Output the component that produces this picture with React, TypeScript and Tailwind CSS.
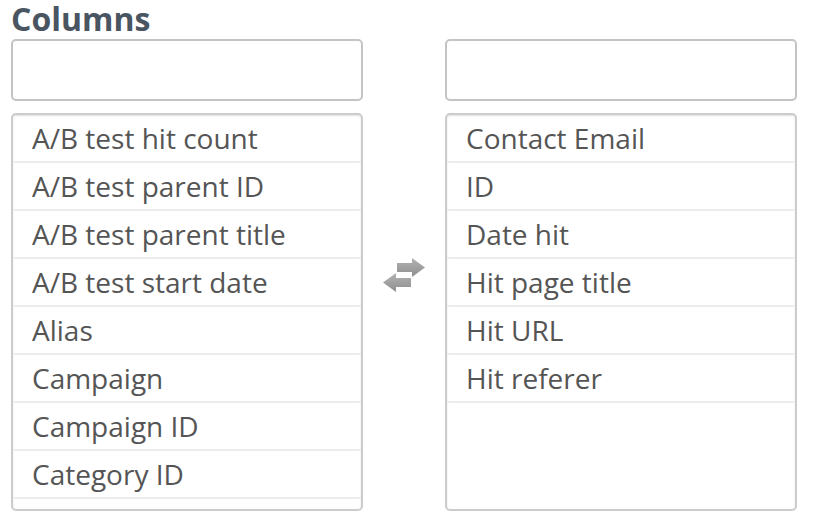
import React from "react";

const left = [
  "A/B test hit count",
  "A/B test parent ID",
  "A/B test parent title",
  "A/B test start date",
  "Alias",
  "Campaign",
  "Campaign ID",
  "Category ID",
];
const right = ["Contact Email", "ID", "Date hit", "Hit page title", "Hit URL", "Hit referer"];

function List({ items }: { items: string[] }) {
  return (
    <div className="h-[398px] w-[352px] overflow-hidden rounded-[5px] border-2 border-[#cccccc] bg-white shadow-[inset_0_1px_2px_rgba(0,0,0,0.12)]">
      {items.map((t) => (
        <div
          key={t}
          className="flex h-[48px] items-center border-b-2 border-[#ececec] pl-[19px] text-[28px] text-[#555555]"
        >
          {t}
        </div>
      ))}
    </div>
  );
}

export default function App() {
  return (
    <div
      className="h-[524px] w-[818px] bg-white pl-[11px]"
      style={{ fontFamily: '"Open Sans", "Liberation Sans", sans-serif' }}
    >
      <div className="h-[39px] text-[32px] font-bold leading-[38px] text-[#4a5562]">Columns</div>
      <div className="flex">
        <div className="flex flex-col gap-[12px]">
          <div className="h-[62px] w-[352px] rounded-[5px] border-2 border-[#c4c4c4] bg-white" />
          <List items={left} />
        </div>
        <div className="flex w-[82px] items-start justify-center pt-[219px]">
          <svg width="44" height="34" viewBox="0 0 44 34">
            <defs>
              <linearGradient id="g" x1="0" y1="0" x2="0" y2="1">
                <stop offset="0" stopColor="#b3b3b3" />
                <stop offset="1" stopColor="#8e8e8e" />
              </linearGradient>
            </defs>
            <path d="M15 5 H30 V0 L43 9.5 L30 19 V14 H15 Z" fill="url(#g)" />
            <path d="M29 20 H14 V15 L1 24.5 L14 34 V29 H29 Z" fill="url(#g)" />
          </svg>
        </div>
        <div className="flex flex-col gap-[12px]">
          <div className="h-[62px] w-[352px] rounded-[5px] border-2 border-[#c4c4c4] bg-white" />
          <List items={right} />
        </div>
      </div>
    </div>
  );
}
